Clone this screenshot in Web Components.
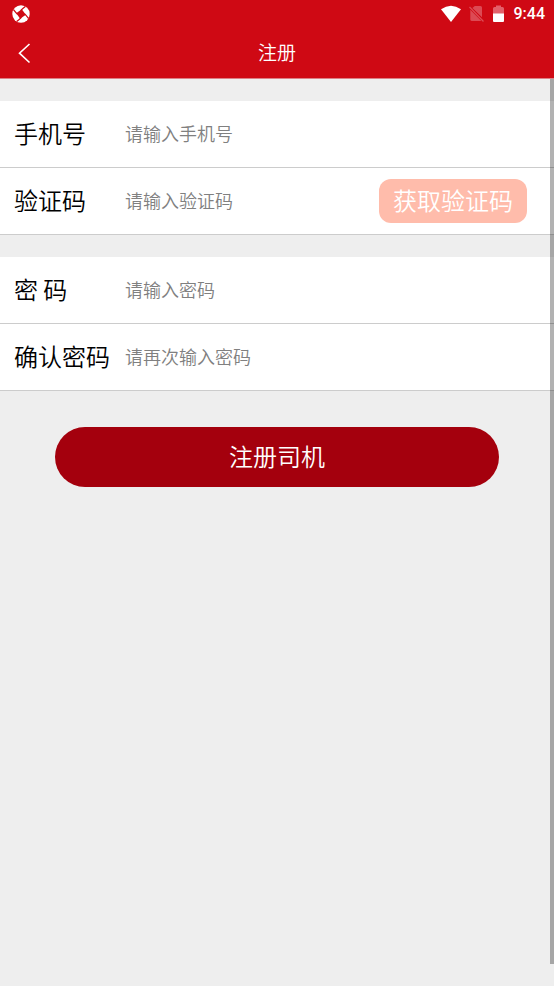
<!DOCTYPE html>
<html lang="zh-CN">
<head>
<meta charset="utf-8">
<meta name="viewport" content="width=device-width, initial-scale=1">
<title>注册</title>
<style>
html, body { height: 100%; }
body { margin: 0; background: #eee; color: #000; font-family: "Noto Sans CJK SC", sans-serif; font-weight: 350; }
</style>
</head>
<body>
<register-page></register-page>
<script>
const define = (name, html, setup) => customElements.define(name, class extends HTMLElement {
  connectedCallback() {
    if (this.shadowRoot) return;
    const t = document.createElement('template');
    t.innerHTML = html;
    this.attachShadow({ mode: 'open' }).append(t.content.cloneNode(true));
    if (setup) setup(this, this.shadowRoot);
  }
});

define('status-bar', `
<style>
:host { display: flex; align-items: center; height: 28px; padding: 0 9px 0 12px; color: #fff; }
svg { display: block; }
.right { margin-left: auto; display: flex; align-items: center; }
.wifi { margin-right: 8px; }
.sim { margin-right: 9px; }
.batt { margin-right: 10px; }
time { font: 500 16px/28px Roboto, sans-serif; }
</style>
<svg width="18" height="18" viewBox="0 0 18 18" aria-hidden="true">
  <circle cx="9" cy="9" r="8.700" fill="#fff"/>
  <path d="M9.800 4.200 13.800 9.800 8.200 13.800 4.200 8.200z" fill="#cf0914"/>
  <g fill="none" stroke="#cf0914" stroke-width="1.300">
    <path d="M8.600 5.600Q10.400 3.700 13.300 1.500"/>
    <path d="M12.400 8.600Q14.300 10.400 16.500 13.300"/>
    <path d="M9.400 12.400Q7.600 14.300 4.700 16.500"/>
    <path d="M5.600 9.400Q3.700 7.600 1.500 4.700"/>
  </g>
</svg>
<div class="right">
  <svg class="wifi" width="20" height="18" viewBox="0 0 20 18" aria-hidden="true"><path d="M0 4.200Q10-2.800 20 4.200L10 17z" fill="#fff"/></svg>
  <svg class="sim" width="15" height="18" viewBox="0 0 15 18" aria-hidden="true">
    <path d="M5.800 1H11.500Q13 1 13 2.500V12.300L3.400 2.900zM1.300 4.800 12.400 16H3Q1.300 16 1.300 14.500z" fill="#dc4a54"/>
    <path d="M0.500 2 14.500 16.500" stroke="#dc4a54" stroke-width="1.300"/>
  </svg>
  <svg class="batt" width="11" height="18" viewBox="0 0 11 18" aria-hidden="true">
    <path d="M0 9V3.500Q0 2 1.500 2H3V.5H8V2H9.500Q11 2 11 3.500V9z" fill="#e3606a"/>
    <path d="M0 8.500H11V16Q11 17 10 17H1Q0 17 0 16z" fill="#fff"/>
  </svg>
  <time>9:44</time>
</div>`);

define('nav-bar', `
<style>
:host { display: grid; grid-template-columns: 48px 1fr 48px; align-items: center; height: 50px; color: #fff; }
button { width: 48px; height: 50px; padding: 0; border: 0; background: none; color: inherit; display: grid; place-items: center; }
h1 { margin: 0; padding-bottom: 2px; font-size: 19px; line-height: 28px; font-weight: 350; text-align: center; }
</style>
<button type="button" aria-label="返回"><svg width="14" height="22" viewBox="0 0 14 22" aria-hidden="true"><path d="M12.500 2 2.500 11.200 12.500 20.500" fill="none" stroke="#fff" stroke-width="1.600"/></svg></button>
<h1><slot></slot></h1>`);

define('form-group', `
<style>:host { display: block; margin-top: 22px; background: #fff; }</style><slot></slot>`);

define('form-row', `
<style>
:host { display: flex; align-items: center; height: 66px; padding: 0 27px 0 14px; border-bottom: 1px solid #ccc; }
label { flex: 0 0 111px; padding-bottom: 2px; font-size: 24px; line-height: 36px; white-space: nowrap; }
input { flex: 1; min-width: 0; box-sizing: border-box; height: 44px; padding: 0 0 2px; border: 0; outline: 0; background: none; font: 350 18px/28px "Noto Sans CJK SC", sans-serif; color: #000; }
input::placeholder { color: #808080; opacity: 1; }
</style>
<label for="field"></label><input id="field"><slot></slot>`, (host, root) => {
  root.querySelector('label').textContent = host.getAttribute('label');
  const input = root.querySelector('input');
  input.placeholder = host.getAttribute('hint');
  input.type = host.getAttribute('type') || 'text';
});

define('code-button', `
<style>
:host { display: block; }
button { height: 44px; padding: 0 14px 2px; border: 0; border-radius: 12px; background: #ffbcab; color: #fff; font: 350 24px/36px "Noto Sans CJK SC", sans-serif; white-space: nowrap; }
</style>
<button type="button"><slot></slot></button>`);

define('submit-button', `
<style>
:host { display: block; margin: 36px 10% 0; }
button { width: 100%; height: 60px; padding: 0 0 2px; border: 0; border-radius: 30px; background: #a4000d; color: #fff; font: 350 24px/36px "Noto Sans CJK SC", sans-serif; }
</style>
<button type="button"><slot></slot></button>`);

define('register-page', `
<style>
:host { display: flex; flex-direction: column; min-height: 100%; }
header { background: #cf0914; border-bottom: 1px solid #dc8086; }
main { display: flow-root; position: relative; flex: 1; }
.thumb { position: absolute; top: 0; right: 0; bottom: 22px; width: 4px; background: rgba(0, 0, 0, .3); }
</style>
<header><status-bar></status-bar><nav-bar>注册</nav-bar></header>
<main>
  <form-group>
    <form-row label="手机号" hint="请输入手机号" type="tel"></form-row>
    <form-row label="验证码" hint="请输入验证码"><code-button>获取验证码</code-button></form-row>
  </form-group>
  <form-group>
    <form-row label="密 码" hint="请输入密码" type="password"></form-row>
    <form-row label="确认密码" hint="请再次输入密码" type="password"></form-row>
  </form-group>
  <submit-button>注册司机</submit-button>
  <div class="thumb"></div>
</main>`);
</script>
</body>
</html>
